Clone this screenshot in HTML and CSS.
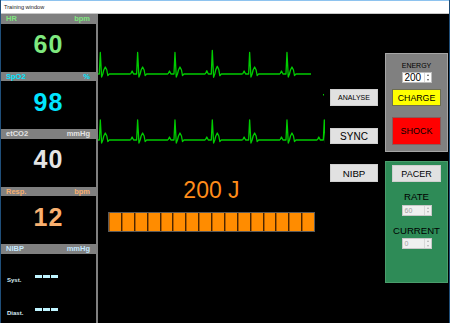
FILE: index.html
```html
<!DOCTYPE html>
<html lang="en">
<head>
    <meta charset="UTF-8">
    <meta name="viewport" content="width=device-width, initial-scale=1.0">
    <title>Training window</title>
    <link rel="stylesheet" href="styles.css">
</head>
<body>
    <div class="window">
        <div class="titlebar">Training window</div>
        <div class="main">
            <div class="vitals">
                <div class="vital hr">
                    <div class="vital-head"><span>HR</span><span>bpm</span></div>
                    <div class="vital-value">60</div>
                </div>
                <div class="vital spo2">
                    <div class="vital-head"><span>SpO2</span><span>%</span></div>
                    <div class="vital-value">98</div>
                </div>
                <div class="vital etco2">
                    <div class="vital-head"><span>etCO2</span><span>mmHg</span></div>
                    <div class="vital-value">40</div>
                </div>
                <div class="vital resp">
                    <div class="vital-head"><span>Resp.</span><span>bpm</span></div>
                    <div class="vital-value">12</div>
                </div>
                <div class="vital nibp">
                    <div class="vital-head"><span>NIBP</span><span>mmHg</span></div>
                    <div class="nibp-box">
                        <div class="nibp-row">
                            <span class="nibp-label">Syst.</span>
                            <span class="dashes"><i></i><i></i><i></i></span>
                        </div>
                        <div class="nibp-row second">
                            <span class="nibp-label">Diast.</span>
                            <span class="dashes"><i></i><i></i><i></i></span>
                        </div>
                    </div>
                </div>
            </div>

            <div class="screen">
                <div class="scope">
                    <svg class="traces" width="232" height="165" viewBox="0 0 232 165">
                        <defs>
                            <path id="beat" d="M-7 0 L-5.5 -3 L-4 0 L-1 0 L0 -21.5 L1.3 3 L2.5 0 L3.5 -4 L5 -7 L6.5 -4 L7.5 1.5 L9 0 L30.33 0"/>
                            <path id="beat2" d="M-7 0 L-5.5 -3 L-4 0 L-1 0 L0 -20 L1.3 3 L2.5 0 L3.5 -4 L5 -7 L6.5 -4 L7.5 1.5 L9 0 L30.33 0"/>
                            <clipPath id="clip1"><rect x="0" y="0" width="213" height="95"/></clipPath>
                            <clipPath id="clip2"><rect x="0" y="95" width="227" height="60"/></clipPath>
                        </defs>
                        <g class="trace" clip-path="url(#clip1)">
                            <use href="#beat" x="2.3" y="60"/>
                            <use href="#beat" x="39.63" y="60"/>
                            <use href="#beat" x="76.97" y="60"/>
                            <use href="#beat" x="114.3" y="60" transform="translate(0,-6) scale(1,1.1)"/>
                            <use href="#beat" x="151.63" y="60"/>
                            <use href="#beat" x="188.97" y="60"/>
                        </g>
                        <rect class="blip" x="225" y="80" width="1" height="1.5"/>
                        <g class="trace" clip-path="url(#clip2)">
                            <use href="#beat2" x="2.3" y="126"/>
                            <use href="#beat2" x="39.63" y="126"/>
                            <use href="#beat2" x="76.97" y="126"/>
                            <use href="#beat2" x="114.3" y="126"/>
                            <use href="#beat2" x="151.63" y="126"/>
                            <use href="#beat2" x="188.97" y="126"/>
                            <use href="#beat2" x="226.3" y="126"/>
                        </g>
                    </svg>
                    <div class="energy-readout">200 J</div>
                    <div class="charge-bar">
                        <span></span><span></span><span></span><span></span>
                        <span></span><span></span><span></span><span></span>
                        <span></span><span></span><span></span><span></span>
                        <span></span><span></span><span></span><span></span>
                    </div>
                </div>

                <div class="controls">
                    <button class="btn analyse">ANALYSE</button>
                    <button class="btn sync">SYNC</button>
                    <button class="btn nibp-btn">NIBP</button>
                </div>

                <div class="panels">
                    <div class="panel energy-panel">
                        <div class="panel-label small">ENERGY</div>
                        <div class="spin">
                            <span class="spin-value">200</span>
                            <span class="spin-arrows"><b class="up"></b><b class="down"></b></span>
                        </div>
                        <button class="btn charge">CHARGE</button>
                        <button class="btn shock">SHOCK</button>
                    </div>
                    <div class="panel pacer-panel">
                        <button class="btn pacer">PACER</button>
                        <div class="panel-label">RATE</div>
                        <div class="spin disabled">
                            <span class="spin-value">60</span>
                            <span class="spin-arrows"><b class="up"></b><b class="down"></b></span>
                        </div>
                        <div class="panel-label">CURRENT</div>
                        <div class="spin disabled">
                            <span class="spin-value">0</span>
                            <span class="spin-arrows"><b class="up"></b><b class="down"></b></span>
                        </div>
                    </div>
                </div>
            </div>
        </div>
    </div>
</body>
</html>
```

FILE: styles.css
```css
:root {
    --frame-blue: #1f4e79;
    --panel-gray: #808080;
    --button-gray: #e1e1e1;
    --trace-green: #00cc00;
    --font-sans: 'Liberation Sans', Arial, sans-serif;
}

body {
    margin: 0;
    background-color: #000;
    font-family: var(--font-sans);
}

.window {
    width: 450px;
    height: 323px;
    box-sizing: border-box;
    border-left: 1px solid var(--frame-blue);
    border-right: 1px solid var(--frame-blue);
    display: flex;
    flex-direction: column;
    overflow: hidden;
}

.titlebar {
    height: 12px;
    border-top: 1px solid #8ec3ef;
    border-bottom: 1px solid #c8c8c8;
    background-color: #fff;
    color: #1a1a1a;
    font-size: 5.6px;
    line-height: 12px;
    padding-left: 3px;
}

.main {
    flex: 1;
    display: flex;
    min-height: 0;
}

/* vital signs column */
.vitals {
    width: 97px;
    background-color: var(--panel-gray);
    display: flex;
    flex-direction: column;
}

.vital-head {
    height: 9.5px;
    display: flex;
    justify-content: space-between;
    align-items: center;
    padding: 0 8px 0 5px;
    font-size: 7.5px;
    font-weight: bold;
    line-height: 9.5px;
}

.vital-value {
    height: 48px;
    box-sizing: border-box;
    margin-right: 2px;
    background-color: #000;
    display: flex;
    justify-content: center;
    align-items: center;
    padding-bottom: 6px;
    font-size: 25px;
    font-weight: bold;
    letter-spacing: 1px;
    line-height: 1;
}

.hr { color: #7fe87f; }
.spo2 { color: #00e5ff; }
.etco2 { color: #e4e4e4; }
.resp { color: #f8b070; }
.nibp { color: #c4e8ff; flex: 1; display: flex; flex-direction: column; }

.nibp-box {
    flex: 1;
    margin-right: 2px;
    background-color: #000;
    padding: 21px 0 0 6px;
}

.nibp-row {
    display: flex;
    align-items: flex-end;
    height: 9px;
}

.nibp-row.second {
    margin-top: 24px;
}

.nibp-label {
    width: 28px;
    font-size: 6px;
    line-height: 7px;
    font-weight: bold;
    color: #d8eef6;
}

.dashes {
    display: flex;
    gap: 1px;
    margin-bottom: 6px;
}

.dashes i {
    width: 7px;
    height: 3px;
    background-color: #bff4ff;
}

/* monitor screen */
.screen {
    flex: 1;
    display: flex;
    background-color: #000;
}

.scope {
    width: 232px;
    display: flex;
    flex-direction: column;
}

.traces {
    display: block;
}

.trace use {
    fill: none;
    stroke: var(--trace-green);
    stroke-width: 1.3;
    stroke-linejoin: round;
}

.blip {
    fill: var(--trace-green);
}

.energy-readout {
    width: 207px;
    margin-left: 10px;
    text-align: center;
    color: #ff8c1a;
    font-size: 23px;
    line-height: 23px;
}

.charge-bar {
    width: 207px;
    height: 20px;
    box-sizing: border-box;
    margin: 10px 0 0 10px;
    border: 1px solid #5a5a5a;
    display: flex;
}

.charge-bar span {
    flex: 1;
    background-color: #ff8c00;
    border-right: 1px solid #4a2600;
    box-shadow: inset 1px 0 0 #b05c00;
}

.charge-bar span:last-child {
    border-right: none;
}

.btn {
    margin: 0;
    padding: 0;
    font-family: var(--font-sans);
    color: #000;
    cursor: pointer;
    background-color: var(--button-gray);
    border: 1px solid #cfcfcf;
}

.controls {
    width: 48px;
    display: flex;
    flex-direction: column;
    padding-top: 75px;
    margin-right: 7px;
}

.analyse {
    height: 17px;
    font-size: 7px;
}

.sync {
    height: 16px;
    margin-top: 22px;
    font-size: 10px;
}

.nibp-btn {
    height: 18px;
    margin-top: 20px;
    font-size: 9.7px;
}

.panels {
    width: 63px;
    display: flex;
    flex-direction: column;
    padding-top: 39px;
}

.panel {
    box-sizing: border-box;
    display: flex;
    flex-direction: column;
    align-items: center;
}

.energy-panel {
    height: 99px;
    background-color: var(--panel-gray);
    border: 1px solid #a6a6a6;
    padding-top: 8px;
}

.pacer-panel {
    height: 122px;
    margin-top: 9px;
    background-color: #2e8b57;
    border: 1px solid #4a9d6c;
    padding-top: 3px;
}

.panel-label {
    color: #000;
    font-size: 9.6px;
    line-height: 10px;
    margin-top: 10px;
}

.panel-label.small {
    font-size: 7px;
    line-height: 7px;
    margin-top: 0;
}

.spin {
    width: 30px;
    height: 11px;
    box-sizing: border-box;
    background-color: #fff;
    border: 1px solid #bdbdbd;
    display: flex;
    margin-top: 3px;
}

.spin-value {
    flex: 1;
    font-size: 10px;
    line-height: 9px;
    padding-left: 2px;
    color: #000;
}

.spin-arrows {
    width: 6px;
    border-left: 1px solid #d8d8d8;
    display: flex;
    flex-direction: column;
    justify-content: space-around;
    align-items: center;
}

.spin-arrows b {
    width: 0;
    height: 0;
    border-left: 1.5px solid transparent;
    border-right: 1.5px solid transparent;
}

.spin-arrows .up { border-bottom: 2px solid #555; }
.spin-arrows .down { border-top: 2px solid #555; }

.spin.disabled {
    background-color: #f0f0f0;
    border-color: #c8c8c8;
    margin-top: 2.5px;
}

.spin.disabled .spin-value {
    font-size: 7px;
    color: #a0a0a0;
}

.spin.disabled .spin-arrows b { border-bottom-color: #b0b0b0; border-top-color: #b0b0b0; }

.charge {
    width: 49px;
    height: 17px;
    margin-top: 6px;
    background-color: #ffff00;
    border: 1px solid #6e6e50;
    font-size: 8.8px;
}

.shock {
    width: 49px;
    height: 28px;
    margin-top: 11px;
    background-color: #ff0000;
    border: 1px solid #8a5a5a;
    font-size: 9px;
}

.pacer {
    width: 49px;
    height: 17px;
    font-size: 9px;
}
```
